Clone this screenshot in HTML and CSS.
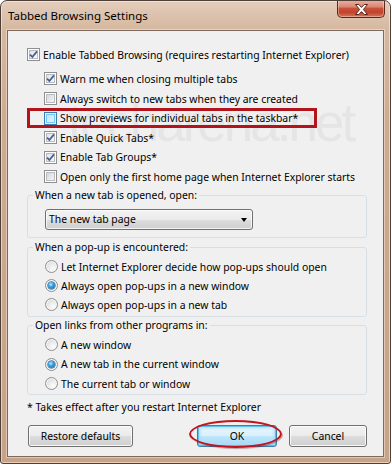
FILE: index.html
```html
<!DOCTYPE html>
<html>
<head>
<meta charset="utf-8">
<link rel="stylesheet" href="styles.css">
</head>
<body>
<div class="window">
  <div class="titlebar">
    <span class="title">Tabbed Browsing Settings</span>
    <div class="close">
      <svg width="13" height="11" viewBox="0 0 13 11"><polygon points="0.5,0.5 3.8,0.5 6.5,3.4 9.2,0.5 12.5,0.5 8.4,5.5 12.5,10.5 9.2,10.5 6.5,7.6 3.8,10.5 0.5,10.5 4.6,5.5" fill="#fff" stroke="#5a2418" stroke-width="1" stroke-linejoin="round"/></svg>
    </div>
  </div>
  <div class="client">
    <div class="watermark">techarena.net</div>

    <div class="row top"><span class="cb on"><svg class="tick" width="9" height="9" viewBox="0 0 9 9"><path d="M1 4.6 L3.4 7 L8 1.4" fill="none" stroke="#4a5f97" stroke-width="1.8"/></svg></span><span>Enable Tabbed Browsing (requires restarting Internet Explorer)</span></div>
    <div class="sub">
      <div class="row"><span class="cb on"><svg class="tick" width="9" height="9" viewBox="0 0 9 9"><path d="M1 4.6 L3.4 7 L8 1.4" fill="none" stroke="#4a5f97" stroke-width="1.8"/></svg></span><span>Warn me when closing multiple tabs</span></div>
      <div class="row"><span class="cb"></span><span>Always switch to new tabs when they are created</span></div>
      <div class="row"><span class="cb hover"></span><span>Show previews for individual tabs in the taskbar*</span></div>
      <div class="row"><span class="cb on"><svg class="tick" width="9" height="9" viewBox="0 0 9 9"><path d="M1 4.6 L3.4 7 L8 1.4" fill="none" stroke="#4a5f97" stroke-width="1.8"/></svg></span><span>Enable Quick Tabs*</span></div>
      <div class="row"><span class="cb on"><svg class="tick" width="9" height="9" viewBox="0 0 9 9"><path d="M1 4.6 L3.4 7 L8 1.4" fill="none" stroke="#4a5f97" stroke-width="1.8"/></svg></span><span>Enable Tab Groups*</span></div>
      <div class="row"><span class="cb"></span><span>Open only the first home page when Internet Explorer starts</span></div>
    </div>

    <fieldset class="group g1">
      <legend>When a new tab is opened, open:</legend>
      <div class="gbody b1">
        <div class="select"><span>The new tab page</span><span class="arrow"></span></div>
      </div>
    </fieldset>

    <fieldset class="group g2">
      <legend>When a pop-up is encountered:</legend>
      <div class="gbody b2">
        <div class="row r19"><span class="rb"></span><span>Let Internet Explorer decide how pop-ups should open</span></div>
        <div class="row r19"><span class="rb sel"><span class="dot"></span></span><span>Always open pop-ups in a new window</span></div>
        <div class="row r19"><span class="rb"></span><span>Always open pop-ups in a new tab</span></div>
      </div>
    </fieldset>

    <fieldset class="group g3">
      <legend>Open links from other programs in:</legend>
      <div class="gbody b3">
        <div class="row r195"><span class="rb"></span><span>A new window</span></div>
        <div class="row r195"><span class="rb sel"><span class="dot"></span></span><span>A new tab in the current window</span></div>
        <div class="row r195"><span class="rb"></span><span>The current tab or window</span></div>
      </div>
    </fieldset>

    <div class="note">* Takes effect after you restart Internet Explorer</div>

    <div class="buttons">
      <div class="btn restore">Restore defaults</div>
      <div class="btn-group">
        <div class="btn ok">OK</div>
        <div class="btn cancel">Cancel</div>
      </div>
    </div>

    <div class="hl-rect"></div>
    <div class="hl-ellipse"></div>
  </div>
</div>
</body>
</html>
```

FILE: styles.css
```css
* { box-sizing: border-box; }
html, body { margin: 0; padding: 0; }
body {
  width: 391px;
  height: 464px;
  overflow: hidden;
  background: #ffffff;
  font-family: "Noto Sans", "DejaVu Sans", sans-serif;
  font-size: 10.4px;
  color: #000;
}
.window {
  width: 391px;
  height: 464px;
  border: 1px solid #4e4038;
  border-radius: 7px 7px 3px 3px;
  background: linear-gradient(180deg, #e3cdbb 0, #d6b8a0 28px, #cdab90 120px, #c7a388 100%);
  box-shadow: inset 0 0 0 1px rgba(255, 238, 222, 0.6);
  display: flex;
  flex-direction: column;
  overflow: hidden;
}
.titlebar {
  height: 29px;
  flex: none;
  display: flex;
  align-items: flex-start;
  justify-content: space-between;
  padding: 0 5px 0 7px;
}
.title {
  font-size: 11.5px;
  line-height: 15px;
  margin-top: 7px;
  color: #000;
}
.close {
  width: 48px;
  height: 18px;
  margin-top: -1px;
  border: 1px solid #5e271c;
  border-top: none;
  border-radius: 0 0 5px 5px;
  background: linear-gradient(180deg, #eab3a3 0, #db8672 40%, #c8513a 50%, #c0432b 72%, #d8735c 100%);
  box-shadow: inset 0 0 0 1px rgba(255, 255, 255, 0.35);
  display: flex;
  align-items: center;
  justify-content: center;
}
.close svg { display: block; margin-top: 1px; }
.client {
  flex: 1;
  margin: 0 6px 6px 6px;
  border: 1px solid #7c6a5e;
  box-shadow: 0 0 0 1px rgba(255, 242, 230, 0.45);
  background: #f0f0f0;
  position: relative;
  padding: 14.2px 16px 0 19px;
}
.watermark {
  position: absolute;
  left: 60px;
  top: 62px;
  font-family: "Liberation Sans", Arial, sans-serif;
  font-size: 53px;
  line-height: 60px;
  letter-spacing: -3px;
  color: #e5e5e5;
  white-space: nowrap;
  pointer-events: none;
}
.row {
  position: relative;
  display: flex;
  align-items: center;
  gap: 3px;
  height: 19.6px;
  white-space: nowrap;
}
.r19 { height: 19px; }
.r195 { height: 19.5px; }
.sub {
  padding-left: 17px;
  margin-top: 4.4px;
}
.cb {
  flex: none;
  width: 13px;
  height: 13px;
  border: 1px solid #8e8f8f;
  background: linear-gradient(135deg, #c9ccd2 0, #e6e7ea 50%, #f8f8f8 100%);
  box-shadow: inset 0 0 0 1px #ffffff, inset 0 0 0 2px #b9bcc1;
  display: flex;
  align-items: center;
  justify-content: center;
}
.cb.on {
  background: linear-gradient(135deg, #d6d9de 0, #eeeff1 50%, #fbfbfb 100%);
}
.cb.hover {
  border-color: #3c7fb1;
  background: linear-gradient(135deg, #b1dffd 0, #d4eefd 55%, #eaf6fe 100%);
  box-shadow: inset 0 0 0 1px #deeff9, inset 0 0 0 2px #79c6f9;
}
.tick { display: block; }
.rb {
  flex: none;
  width: 13px;
  height: 13px;
  border-radius: 50%;
  border: 1px solid #8e8f8f;
  background: radial-gradient(circle at 65% 70%, #fdfdfd 0, #e9e9e9 45%, #cfd1d4 100%);
  box-shadow: inset 0 0 0 1px #f7f7f7;
  display: flex;
  align-items: center;
  justify-content: center;
}
.dot {
  width: 7px;
  height: 7px;
  border-radius: 50%;
  background: radial-gradient(circle at 40% 35%, #b6ecff 0, #35a0de 40%, #135a9a 100%);
  box-shadow: 0 0 0 0.5px #1b4f80;
}
.group {
  margin: 0;
  padding: 0;
  min-width: 0;
  border: 1px solid #d5dfe5;
  border-radius: 3px;
}
.group legend {
  margin-left: 5px;
  padding: 0 2px;
  line-height: 15px;
  white-space: nowrap;
}
.g1 { margin-top: 1.7px; }
.g2 { margin-top: 2.5px; }
.g3 { margin-top: 1.5px; }
.b1 { padding: 5.5px 0 7px 17px; }
.b2 { padding: 2px 0 1.5px 17px; }
.b3 { padding: 1.75px 0 0.5px 17px; }
.select {
  width: 208px;
  height: 21px;
  border: 1px solid #707070;
  border-radius: 3px;
  background: linear-gradient(180deg, #f2f2f2 0, #ebebeb 50%, #dddddd 51%, #cfcfcf 100%);
  box-shadow: inset 0 0 0 1px rgba(255, 255, 255, 0.75);
  display: flex;
  align-items: center;
  justify-content: space-between;
  padding: 0 5px 0 3px;
}
.arrow {
  width: 0;
  height: 0;
  border-left: 3.5px solid transparent;
  border-right: 3.5px solid transparent;
  border-top: 4px solid #000;
  margin-top: 1px;
}
.note {
  margin-top: 4.5px;
  line-height: 15px;
  white-space: nowrap;
}
.buttons {
  margin-top: 10px;
  display: flex;
  justify-content: space-between;
  padding-left: 1px;
}
.btn-group {
  display: flex;
  gap: 12px;
}
.btn {
  height: 22px;
  border: 1px solid #707070;
  border-radius: 3px;
  background: linear-gradient(180deg, #f2f2f2 0, #ebebeb 50%, #dddddd 51%, #cfcfcf 100%);
  box-shadow: inset 0 0 0 1px rgba(255, 255, 255, 0.8);
  display: flex;
  align-items: center;
  justify-content: center;
  white-space: nowrap;
}
.restore { width: 105px; }
.ok {
  width: 80px;
  border-color: #3c7fb1;
  background: linear-gradient(180deg, #eaf6fd 0, #d9f0fc 50%, #bee6fd 51%, #a7d9f5 100%);
  box-shadow: inset 0 0 0 1px #5fc0ec, inset 0 0 3px 2px #a9dcf4;
}
.cancel { width: 78px; }
.hl-rect {
  position: absolute;
  left: 19px;
  top: 77px;
  width: 290px;
  height: 20px;
  border: 3px solid #b3141c;
}
.hl-ellipse {
  position: absolute;
  left: 181px;
  top: 389px;
  width: 93px;
  height: 28px;
  border: 2px solid #c0141e;
  border-radius: 50%;
  box-shadow: 1px 1px 1px rgba(80, 0, 0, 0.35);
}
```
